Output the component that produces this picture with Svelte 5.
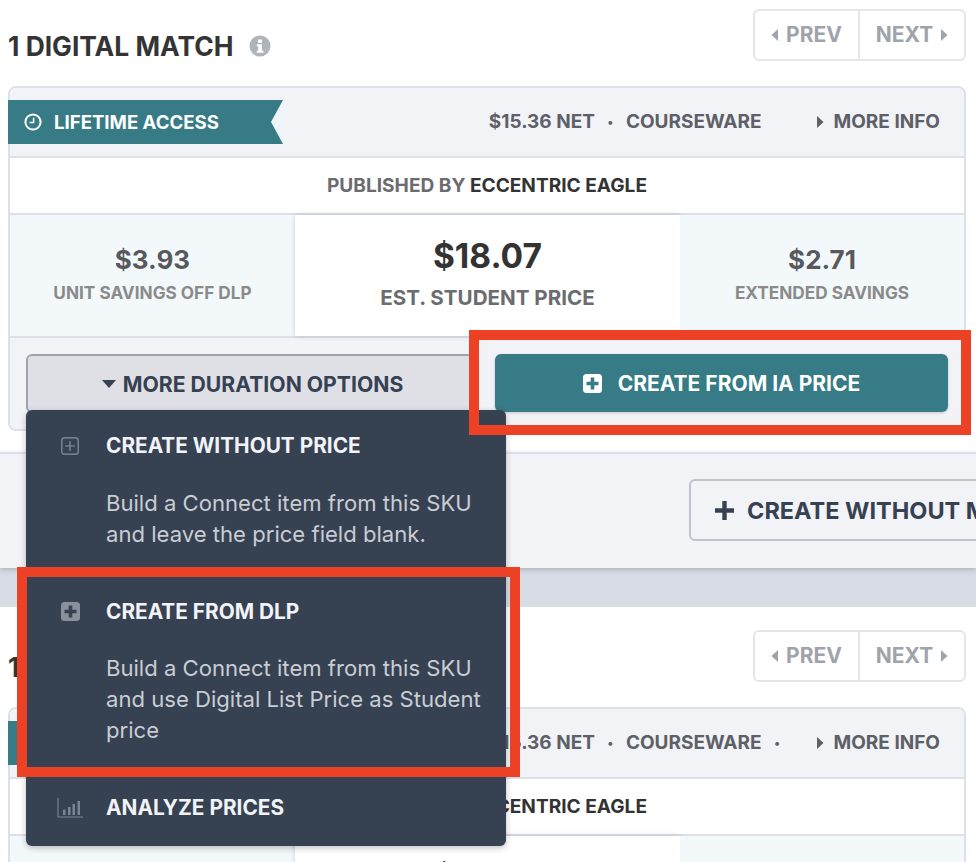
<script>
  const menuItems = [
    {
      title: "CREATE WITHOUT PRICE",
      icon: "outline",
      desc: "Build a Connect item from this SKU and leave the price field blank.",
    },
    {
      title: "CREATE FROM DLP",
      icon: "solid",
      desc: "Build a Connect item from this SKU and use Digital List Price as Student price",
    },
    { title: "ANALYZE PRICES", icon: "bars", desc: "" },
  ];
</script>

{#snippet caret(dir)}
  <svg class="caret" width="8" height="14" viewBox="0 0 8 14">
    {#if dir === "left"}
      <path d="M7 1v12L.5 7z" fill="currentColor" />
    {:else}
      <path d="M1 1v12L7.500 7z" fill="currentColor" />
    {/if}
  </svg>
{/snippet}

{#snippet match(first)}
  <section class="match" class:first>
    <div class="head">
      <h2>
        1 DIGITAL MATCH
        <svg class="info" width="22" height="22" viewBox="0 0 22 22">
          <circle cx="11" cy="11" r="10.5" fill="#b0b4bb" />
          <rect x="9" y="4.5" width="4" height="3.4" rx="0.8" fill="#fff" />
          <path d="M7.8 9.2h5.2v6.6h1.4v2H7.8v-2h1.4v-4.6H7.8z" fill="#fff" />
        </svg>
      </h2>
      <div class="pager">
        <button>{@render caret("left")} PREV</button>
        <button>NEXT {@render caret("right")}</button>
      </div>
    </div>

    <div class="card">
      <div class="card-top">
        <div class="ribbon">
          <svg width="18" height="18" viewBox="0 0 18 18" fill="none" stroke="#fff">
            <circle cx="9" cy="9" r="7.6" stroke-width="2" />
            <path d="M9.6 4.8v4.8H5.6" stroke-width="1.5" />
          </svg>
          LIFETIME ACCESS
          <svg class="notch" width="12" height="44" viewBox="0 0 12 44">
            <path d="M12 0L0 22l12 22z" fill="#eef5f8" />
          </svg>
        </div>
        <div class="meta">
          <span>$15.36 NET</span>
          <span class="dot">•</span>
          <span>COURSEWARE</span>
          <span class="dot">{first ? "" : "•"}</span>
          <span class="more-info">{@render caret("right")} MORE INFO</span>
        </div>
      </div>

      <div class="publisher">PUBLISHED BY <b>ECCENTRIC EAGLE</b></div>

      <div class="stats">
        <div class="stat side">
          <strong>$3.93</strong>
          <span>UNIT SAVINGS OFF DLP</span>
        </div>
        <div class="stat main">
          <strong>$18.07</strong>
          <span>EST. STUDENT PRICE</span>
        </div>
        <div class="stat side">
          <strong>$2.71</strong>
          <span>EXTENDED SAVINGS</span>
        </div>
      </div>

      <div class="card-actions">
        <div class="more-wrap">
          <button class="more-btn">
            <svg width="14" height="8" viewBox="0 0 14 8"><path d="M0 0h14L7 8z" fill="currentColor" /></svg>
            MORE DURATION OPTIONS
          </button>
          {#if first}
            <div class="menu">
              {#each menuItems as item (item.title)}
                <div class="menu-item">
                  <div class="menu-title">
                    <span class="menu-icon">
                      {#if item.icon === "outline"}
                        <svg width="18" height="18" viewBox="0 0 18 18" fill="none" stroke="#8a919d" stroke-width="1.2">
                          <rect x="0.8" y="0.8" width="16.4" height="16.4" rx="2.5" />
                          <path d="M9 4v10M4 9h10" />
                        </svg>
                      {:else if item.icon === "solid"}
                        <svg width="19" height="19" viewBox="0 0 19 19">
                          <rect width="19" height="19" rx="3.5" fill="#8a919d" />
                          <path d="M7.7 3.5h3.6v4.2h4.2v3.6h-4.2v4.2H7.7v-4.2H3.500v-3.600h4.200z" fill="#364152" />
                        </svg>
                      {:else}
                        <svg width="26" height="20" viewBox="0 0 26 20" fill="none" stroke="#7d8491">
                          <path d="M1 0v19h25" stroke-width="1.1" />
                          <path d="M6 11.500h2.500V17H6zM11 9h2.500v8H11zM15.500 6H18v11h-2.500zM20.500 3H23v14h-2.500z" fill="#7d8491" stroke="none" />
                        </svg>
                      {/if}
                    </span>
                    {item.title}
                  </div>
                  {#if item.desc}
                    <p>{item.desc}</p>
                  {/if}
                </div>
              {/each}
            </div>
          {/if}
        </div>
        <button class="create-btn">
          <svg width="19" height="19" viewBox="0 0 19 19">
            <rect width="19" height="19" rx="3.5" fill="#fff" />
            <path d="M7.7 3.500h3.600v4.200h4.200v3.600h-4.200v4.200H7.700v-4.200H3.500V7.700h4.200z" fill="#377b86" />
          </svg>
          CREATE FROM IA PRICE
        </button>
      </div>
    </div>

    {#if first}
      <div class="bar">
        <button class="without-btn">
          <svg width="19" height="19" viewBox="0 0 19 19">
            <path d="M7.300 0h4.400v7.300H19v4.400h-7.300V19H7.300v-7.300H0V7.300h7.300z" fill="currentColor" />
          </svg>
          CREATE WITHOUT MATCH
        </button>
      </div>
      <div class="band"></div>
    {/if}
  </section>
{/snippet}

<div class="page">
  {@render match(true)}
  {@render match(false)}
  <div class="callout callout-a"></div>
  <div class="callout callout-b"></div>
</div>

<style>
  :global(body) {
    background: #fff;
  }
  .page {
    position: relative;
    width: 976px;
    height: 862px;
    overflow: hidden;
    background: #fff;
    font-family: Inter, Lato, sans-serif;
    font-weight: 700;
    color: #333;
  }
  button {
    font: inherit;
    cursor: pointer;
    padding: 0;
  }
  svg {
    flex: none;
  }
  strong,
  b {
    font-weight: 700;
  }

  .head {
    display: flex;
    justify-content: space-between;
    align-items: flex-start;
    padding: 23px 10px 25px 8px;
  }
  .first .head {
    padding-top: 9px;
  }
  h2 {
    display: flex;
    align-items: center;
    gap: 16px;
    margin: 22px 0 0;
    font-size: 26.400px;
    line-height: 30px;
    font-weight: 700;
    color: #343434;
  }
  .pager {
    display: flex;
    height: 52px;
    box-sizing: border-box;
    border: 2px solid #e4e6ea;
    border-radius: 6px;
    background: #fff;
  }
  .pager button {
    display: flex;
    align-items: center;
    justify-content: center;
    gap: 7px;
    padding-bottom: 1px;
    border: 0;
    background: none;
    font-size: 21px;
    color: #9ea3ac;
  }
  .pager button:first-child {
    width: 105px;
    border-right: 2px solid #e4e6ea;
  }
  .pager button:last-child {
    width: 104px;
  }

  .card {
    margin: 0 10px 0 8px;
    border: 2px solid #dde0e8;
    border-radius: 8px;
  }
  .card-top {
    display: flex;
    justify-content: space-between;
    height: 70px;
    padding-top: 12px;
    box-sizing: border-box;
    background: #f1f3f7;
    border-radius: 6px 6px 0 0;
    border-bottom: 2px solid #dde0e8;
    font-size: 19px;
  }
  .ribbon {
    position: relative;
    display: flex;
    align-items: center;
    gap: 12px;
    box-sizing: border-box;
    width: 275px;
    height: 44px;
    margin-left: -2px;
    padding-left: 16px;
    background: #377b86;
    color: #fff;
    font-size: 18.600px;
  }
  .notch {
    position: absolute;
    right: 0;
    top: 0;
  }
  .meta {
    display: flex;
    align-items: flex-start;
    height: 44px;
    line-height: 44px;
    padding-right: 24px;
    color: #5d6066;
  }
  .dot {
    width: 31px;
    text-align: center;
    font-size: 12px;
  }
  .more-info {
    display: flex;
    align-items: center;
    gap: 10px;
    margin-left: 23px;
  }

  .publisher {
    height: 57px;
    box-sizing: border-box;
    line-height: 54px;
    text-align: center;
    font-size: 19.100px;
    color: #6a6c70;
    border-bottom: 2px solid #dde0e8;
  }
  .publisher b {
    color: #333;
  }

  .stats {
    display: grid;
    grid-template-columns: 285px 1fr 284px;
    height: 123px;
    border-bottom: 2px solid #dde0e8;
    box-sizing: border-box;
  }
  .stat {
    display: flex;
    flex-direction: column;
    align-items: center;
  }
  .stat.side {
    background: #f3f8fb;
    padding-top: 27px;
  }
  .stat.side strong {
    font-size: 26px;
    line-height: 36px;
    color: #58595c;
  }
  .stat.side span {
    margin-top: 4px;
    font-size: 17.200px;
    line-height: 22px;
    color: #8a8a8a;
  }
  .stat.main {
    padding-top: 19px;
    background: #fff;
    box-shadow: 0 0 5px rgba(60, 70, 90, 0.22);
  }
  .stat.main strong {
    font-size: 33.500px;
    line-height: 44px;
    color: #333;
  }
  .stat.main span {
    margin-top: 7px;
    font-size: 20.600px;
    line-height: 26px;
    color: #6a6c70;
  }

  .card-actions {
    display: flex;
    gap: 16px;
    height: 91px;
    box-sizing: border-box;
    padding: 16px;
    background: #f1f3f7;
    border-radius: 0 0 6px 6px;
  }
  .more-wrap {
    position: relative;
    flex: 1;
  }
  .more-btn {
    display: flex;
    align-items: center;
    justify-content: center;
    gap: 7px;
    width: 100%;
    height: 59px;
    box-sizing: border-box;
    border: 2px solid #9ea3ac;
    border-radius: 6px;
    background: #dfe0e6;
    color: #364152;
    font-size: 21.200px;
  }
  .create-btn {
    flex: 1;
    display: flex;
    align-items: center;
    justify-content: center;
    gap: 16px;
    height: 58px;
    border: 0;
    border-radius: 6px;
    background: #377b86;
    color: #fff;
    font-size: 21px;
    box-shadow: 0 1px 3px rgba(0, 0, 0, 0.18);
  }

  .menu {
    position: absolute;
    z-index: 5;
    top: 56px;
    left: 0;
    width: 480px;
    border-radius: 6px;
    background: #364152;
    box-shadow: 0 2px 6px rgba(0, 0, 0, 0.25);
  }
  .menu-item {
    padding: 24px 20px 26px 80px;
  }
  .menu-title {
    position: relative;
    font-size: 20.800px;
    line-height: 24px;
    color: #f1f3f7;
  }
  .menu-icon {
    position: absolute;
    left: -45px;
    top: 50%;
    width: 18px;
    height: 20px;
    display: flex;
    align-items: center;
    justify-content: center;
    transform: translateY(-50%);
  }
  .menu-item p {
    margin: 29.500px 0 0;
    font-size: 22.100px;
    line-height: 31px;
    font-weight: 400;
    color: #c9cdd4;
  }

  .bar {
    margin-top: 21px;
    height: 116px;
    box-sizing: border-box;
    padding: 25px 0 0 689px;
    background: #f1f3f7;
    border-top: 2px solid #dde0e8;
    white-space: nowrap;
    box-shadow: 0 2px 5px rgba(60, 70, 90, 0.25);
    position: relative;
  }
  .without-btn {
    display: inline-flex;
    align-items: center;
    gap: 13px;
    height: 62px;
    box-sizing: border-box;
    padding: 0 24px;
    border: 2px solid #c0c3cd;
    border-radius: 6px;
    background: transparent;
    color: #364152;
    font-size: 23.500px;
  }
  .band {
    height: 39px;
    background: #d8dce5;
  }

  .callout {
    position: absolute;
    z-index: 6;
    box-sizing: border-box;
    border: 10px solid #ec4125;
    pointer-events: none;
  }
  .callout-a {
    left: 469px;
    top: 330px;
    width: 502px;
    height: 105px;
  }
  .callout-b {
    left: 17px;
    top: 567px;
    width: 503px;
    height: 210px;
  }
</style>
